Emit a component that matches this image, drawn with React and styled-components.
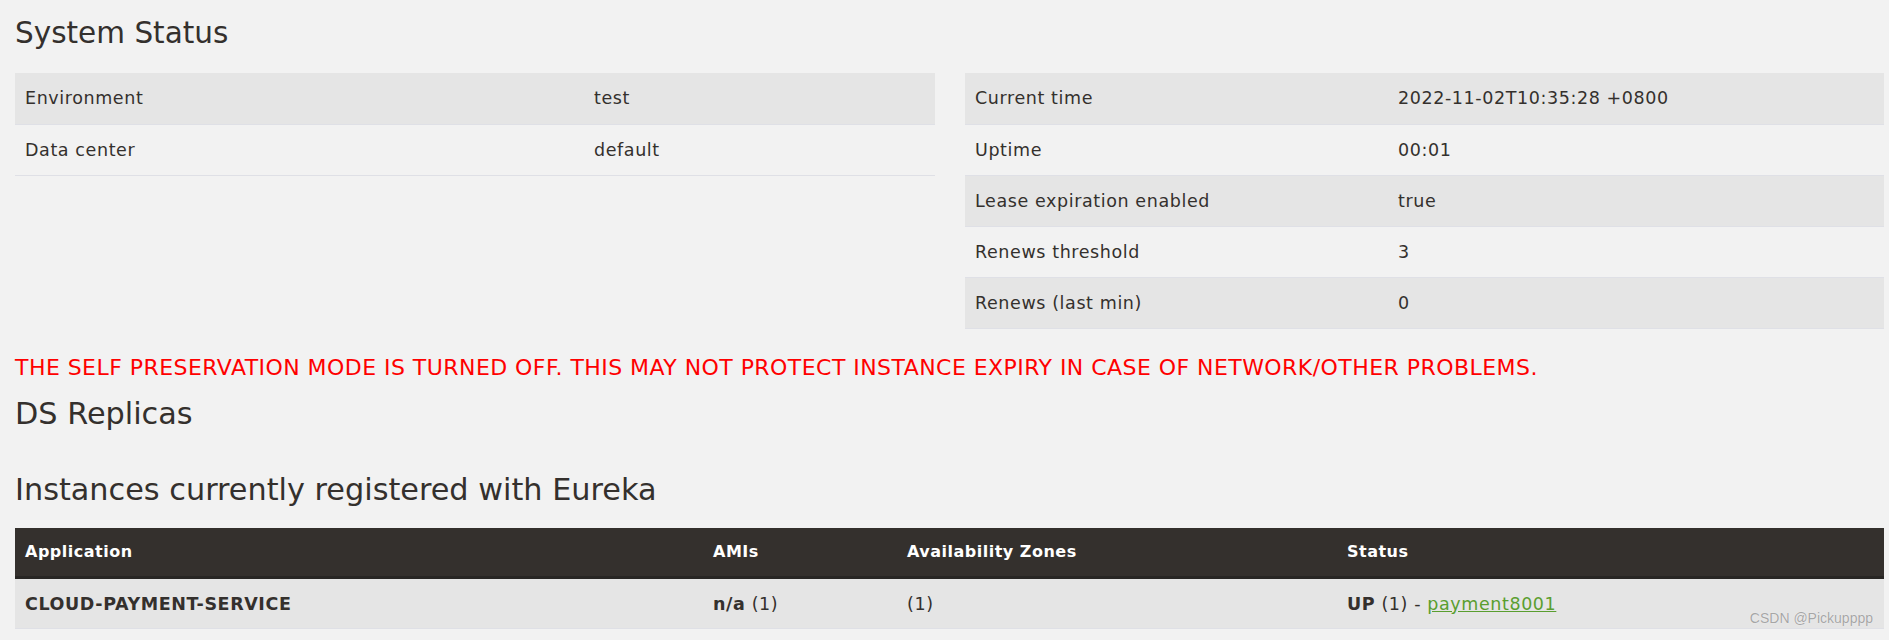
import styled, { createGlobalStyle } from "styled-components";

const GlobalStyle = createGlobalStyle`
  html, body {
    margin: 0;
    padding: 0;
    background: #f2f2f2;
  }
  body {
    color: #34302d;
    font-family: "DejaVu Sans", "Open Sans", sans-serif;
  }
  * {
    box-sizing: border-box;
  }
`;

const Page = styled.div`
  position: relative;
  padding: 0 5px 0 15px;
  width: 1889px;
  height: 640px;
  overflow: hidden;
`;

const Title = styled.h1`
  font-weight: 400;
  font-size: 29.5px;
  line-height: 36px;
  margin: 0;
  padding-top: 15px;
`;

const SubTitle = styled.h2`
  font-weight: 400;
  font-size: 30.3px;
  line-height: 36px;
  margin: ${(p) => p.$margin || "0"};
`;

const Columns = styled.div`
  display: grid;
  grid-template-columns: 920px 919px;
  column-gap: 30px;
  align-items: start;
  margin-top: 22px;
`;

const Table = styled.table`
  width: 100%;
  border-collapse: collapse;
  table-layout: fixed;
  font-size: 17.5px;
  letter-spacing: 0.6px;
  margin-top: ${(p) => p.$top || "0"};
`;

const Row = styled.tr`
  background: ${(p) => (p.$striped ? "#e5e5e5" : "transparent")};
  border-bottom: 1px solid #dfe0e6;
`;

const Cell = styled.td`
  height: 51px;
  padding: 0 10px;
  line-height: 20px;
  vertical-align: middle;
  white-space: nowrap;
  width: ${(p) => p.$width || "auto"};
`;

const Warning = styled.h3`
  color: #ff0000;
  font-weight: 400;
  font-size: 22px;
  letter-spacing: 0.45px;
  line-height: 26px;
  margin: 26px 0 0;
  white-space: nowrap;
`;

const HeadRow = styled.tr`
  background: #34302d;
  border-bottom: 3px solid #282624;
`;

const HeadCell = styled.th`
  color: #fff;
  text-align: left;
  font-weight: 700;
  font-size: 16px;
  letter-spacing: 0.5px;
  height: 50px;
  padding: 0 10px;
  vertical-align: middle;
  width: ${(p) => p.$width || "auto"};
`;

const Strong = styled.b`
  font-weight: 700;
`;

const Link = styled.a`
  color: #5a9e2f;
  text-decoration: underline;
`;

const Watermark = styled.span`
  position: absolute;
  right: 16px;
  top: 610px;
  font-family: "Liberation Sans", Arial, sans-serif;
  font-size: 14px;
  color: #a6a6a6;
  text-shadow: 0 0 1px #fff;
`;

const leftRows = [
  ["Environment", "test"],
  ["Data center", "default"],
];

const rightRows = [
  ["Current time", "2022-11-02T10:35:28 +0800"],
  ["Uptime", "00:01"],
  ["Lease expiration enabled", "true"],
  ["Renews threshold", "3"],
  ["Renews (last min)", "0"],
];

const InfoTable = ({ rows, keyWidth }) => (
  <Table>
    <tbody>
      {rows.map(([k, v], i) => (
        <Row key={k} $striped={i % 2 === 0}>
          <Cell $width={keyWidth}>{k}</Cell>
          <Cell>{v}</Cell>
        </Row>
      ))}
    </tbody>
  </Table>
);

export default function App() {
  return (
    <Page>
      <GlobalStyle />
      <Title>System Status</Title>
      <Columns>
        <InfoTable rows={leftRows} keyWidth="569px" />
        <InfoTable rows={rightRows} keyWidth="423px" />
      </Columns>

      <Warning>
        THE SELF PRESERVATION MODE IS TURNED OFF. THIS MAY NOT PROTECT INSTANCE EXPIRY IN CASE OF
        NETWORK/OTHER PROBLEMS.
      </Warning>

      <SubTitle $margin="15px 0 0">DS Replicas</SubTitle>
      <SubTitle $margin="40px 0 0">Instances currently registered with Eureka</SubTitle>

      <Table $top="20px">
        <thead>
          <HeadRow>
            <HeadCell $width="688px">Application</HeadCell>
            <HeadCell $width="194px">AMIs</HeadCell>
            <HeadCell $width="440px">Availability Zones</HeadCell>
            <HeadCell>Status</HeadCell>
          </HeadRow>
        </thead>
        <tbody>
          <Row $striped>
            <Cell>
              <Strong>CLOUD-PAYMENT-SERVICE</Strong>
            </Cell>
            <Cell>
              <Strong>n/a</Strong> (1)
            </Cell>
            <Cell>(1)</Cell>
            <Cell>
              <Strong>UP</Strong> (1) - <Link href="#">payment8001</Link>
            </Cell>
          </Row>
        </tbody>
      </Table>

      <Watermark>CSDN @Pickupppp</Watermark>
    </Page>
  );
}
